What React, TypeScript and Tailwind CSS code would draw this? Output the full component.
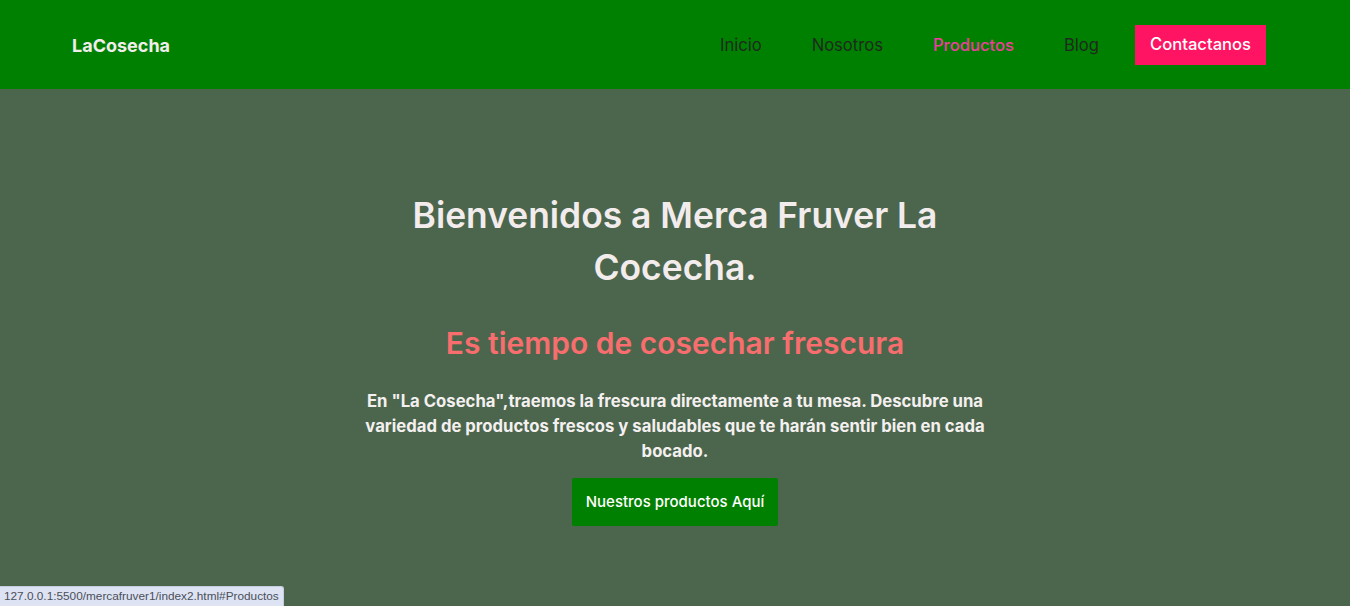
import React from "react";

export default function App() {
  const font = { fontFamily: "Inter, 'Noto Sans', sans-serif" };
  return (
    <div style={font} className="min-h-[606px] bg-[#4b664d] relative">
      <header className="h-[89px] bg-[#008000] flex items-center justify-between pl-[72px] pr-[84px]">
        <div className="text-[18px] font-bold text-[#f2eded] pt-[2px]">LaCosecha</div>
        <nav className="flex items-center text-[16.6px] pt-[2px]">
          <a className="text-[#1f2a1f] mr-[50px]">Inicio</a>
          <a className="text-[#1f2a1f] mr-[50px]">Nosotros</a>
          <a className="text-[#f03c9e] font-medium mr-[50px]">Productos</a>
          <a className="text-[#1f2a1f] mr-[36px]">Blog</a>
          <a className="bg-[#ff1463] text-white font-medium h-[40px] px-[15px] flex items-center -mt-[2px]">Contactanos</a>
        </nav>
      </header>
      <main className="flex flex-col items-center text-center pt-[101px]">
        <h1 className="text-[35.4px] font-semibold leading-[52px] text-[#f3ecec] max-w-[600px]">
          Bienvenidos a Merca Fruver La Cocecha.
        </h1>
        <h2 className="mt-[29px] text-[30px] font-semibold text-[#f86d6d] leading-[40px]">
          Es tiempo de cosechar frescura
        </h2>
        <p className="mt-[26px] text-[16.7px] font-bold text-[#f5f0f0] leading-[25px] max-w-[650px]">
          En "La Cosecha",traemos la frescura directamente a tu mesa. Descubre una variedad de productos frescos y saludables que te harán sentir bien en cada bocado.
        </p>
        <button className="mt-[14px] h-[48px] px-[14px] bg-[#008000] text-white text-[15px] font-medium rounded-[2px]">
          Nuestros productos Aquí
        </button>
      </main>
      <div
        style={{ fontFamily: "'Liberation Sans', sans-serif" }}
        className="absolute left-0 bottom-0 h-[20px] px-[4px] flex items-center bg-[#dee3f3] border-t border-r border-[#c7cde0] rounded-tr-[3px] text-[11.8px] text-[#4a4f5a]"
      >
        127.0.0.1:5500/mercafruver1/index2.html#Productos
      </div>
    </div>
  );
}
